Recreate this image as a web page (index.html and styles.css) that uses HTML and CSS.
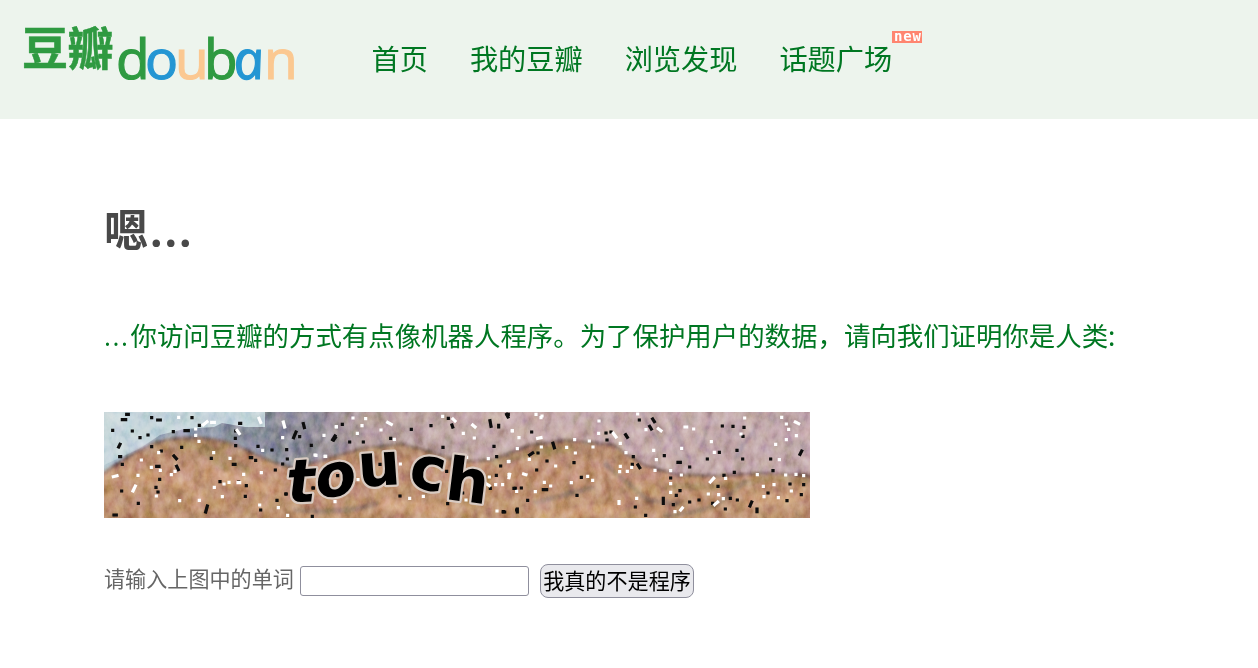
FILE: index.html
```
<!DOCTYPE html>
<html lang="zh-CN">
<head>
<meta charset="utf-8">
<title>豆瓣</title>
<link rel="stylesheet" href="styles.css">
</head>
<body>
<header class="header">
  <svg class="logo" width="280" height="66" viewBox="0 0 280 66" role="img" aria-label="豆瓣 douban">
    <text class="logo-cn" x="-2 43.500" y="46">豆瓣</text>
    <text class="logo-en" y="60"><tspan class="green" x="92">d</tspan><tspan class="blue" x="121">o</tspan><tspan class="orange" x="151">u</tspan><tspan class="green" x="180">b</tspan><tspan class="orange" x="240">n</tspan></text>
    <text class="logo-en logo-a blue" transform="translate(212 60) skewX(10)">a</text>
  </svg>
  <nav class="nav">
    <a class="nav-link">首页</a>
    <a class="nav-link">我的豆瓣</a>
    <a class="nav-link">浏览发现</a>
    <a class="nav-link">话题广场<span class="badge">new</span></a>
  </nav>
</header>
<main class="content">
  <h1 class="title">嗯<span class="title-dots">...</span></h1>
  <p class="message"><span class="dots">...</span>你访问豆瓣的方式有点像机器人程序。为了保护用户的数据，请向我们证明你是人类:</p>
  <svg class="captcha" width="706" height="106" viewBox="0 0 706 106">
    <defs>
      <linearGradient id="sky" x1="0" x2="1" y1="0" y2="0">
        <stop offset="0" stop-color="#b9c8d1"/><stop offset=".12" stop-color="#929bab"/><stop offset=".2" stop-color="#858a99"/><stop offset=".29" stop-color="#8c8a94"/><stop offset=".37" stop-color="#b39d9b"/><stop offset=".6" stop-color="#c5aaa7"/><stop offset="1" stop-color="#bfa5a7"/>
      </linearGradient>
      <linearGradient id="hill" x1="0" x2="0" y1="0" y2="1">
        <stop offset="0" stop-color="#a8805f"/><stop offset=".35" stop-color="#c19173"/><stop offset="1" stop-color="#bb906b"/>
      </linearGradient>
      <filter id="soft" x="-5%" y="-20%" width="110%" height="140%"><feGaussianBlur stdDeviation="1.5"/></filter>
      <filter id="grain" x="0" y="0" width="100%" height="100%" color-interpolation-filters="sRGB">
        <feTurbulence type="fractalNoise" baseFrequency=".1 .07" numOctaves="4" seed="8"/>
        <feColorMatrix values="1.4 .3 .1 0 -.35  1.1 .6 .1 0 -.35  1.1 .2 .6 0 -.38  0 0 0 0 1"/>
      </filter>
      <filter id="dotblur" x="-5%" y="-5%" width="110%" height="110%"><feGaussianBlur stdDeviation="1.500"/></filter>
      <filter id="textblur"><feGaussianBlur stdDeviation=".4"/></filter>
    </defs>
    <rect width="706" height="106" fill="url(#sky)"/>
    <path d="M0 0H161V15L141 15L118 11L110 15L80 17L56 23L35 37L0 53Z" fill="#c5d5da"/>
    <g filter="url(#soft)">
      <path d="M-5 110V65Q20 45 49 32Q70 25 93 26Q115 27 129 32L163 48L190 57L216 49L259 36L299 32L336 43L356 50L389 48L426 33L463 28L509 33L539 53L573 63L613 64L663 61L711 64V110Z" fill="url(#hill)" stroke="#83675d" stroke-width="3"/>
      <path d="M75 31Q110 35 145 60M92 33L125 59M389 53Q430 37 478 37M560 74Q620 78 665 66L706 69" fill="none" stroke="#ab8961" stroke-width="7"/>
      <path d="M560 104Q600 100 615 91L643 68M430 91L490 75M500 51L544 88L575 92M190 98Q240 103 280 90" fill="none" stroke="#927867" stroke-width="5" opacity=".7"/>
      <path d="M24 63Q80 65 102 86M100 60L176 80M275 92L350 99M430 105L520 96M640 90L700 83" fill="none" stroke="#cb9d78" stroke-width="11"/>
      <path d="M565 6L586 48M537 0L557 35M656 8L630 48M606 9L596 38" fill="none" stroke="#a18b97" stroke-width="2"/>
    </g>
    <rect class="texture" width="706" height="106" filter="url(#grain)"/>
    <g class="specks">
      <g transform="translate(-4 -7) scale(.33333)" filter="url(#dotblur)">
        <path class="black" d="M80 28h5M67 44h10M155 38h0M173 45h8M276 38h0M298 61h0M38 76h0M97 78h0M120 98h0M144 90h0M220 80h0M255 77h10M60 118l-4 8M59 155h3M155 125h0M184 138h0M245 127h0M222 153l7 8M67 178h0M170 184h7M230 184l5 10M179 223h0M168 247h0M174 261h0M65 258h0M115 295h0M42 330h7M322 303l-5 18M419 55h3M407 78h0M406 100h0M407 122h0M334 160h0M400 178h5M451 158h4M467 166h0M474 124h0M516 135h0M560 134h0M562 162h0M548 177h0M526 195h0M360 230h0M416 231h0M439 242h0M436 274h0M531 286h0M558 267h0M482 315h0M610 56l3 12M588 81l-7 17M599 95h0M706 98l-5 7M634 121h0M640 249h0"/>
        <path class="white" d="M236 37h0M310 59l11-9M335 52h8M287 72h0M287 91h0M297 109h0M341 143h0M176 143h0M124 165h0M154 187h0M181 196h0M214 209h0M225 199h0M114 211h0M40 215l11-3M106 243l-7 15M169 273h0M239 287h0M298 286h0M367 275h0M343 247h0M372 237h0M387 232h0M414 233h5M390 160h0M431 208h0M484 203h0M479 300h0M535 308h0M563 331h0M488 136h0M477 40l5 12M550 51l4 15M548 98h0M672 91h0M709 65h0M411 76l7 10M648 151h0M675 154h0"/>
      </g>
      <g transform="translate(176 -7) scale(.33333)" filter="url(#dotblur)">
        <path class="black" d="M187 58h0M165 93l-7 11M209 111h0M250 111h0M394 73h0M453 62h0M505 40h0M516 60l2 6M332 100h0M489 127h0M630 47l3 17M656 61v5M682 28h3M642 124h0M650 155h0M662 183h0M300 178h0M173 212h0M99 249h0M18 267h0M97 334h0M360 273h0M503 296h0M539 285h0M548 264h0M649 211h0M631 250h0M670 320h0M710 315h0M706 250h0M500 199h0"/>
        <path class="white" d="M219 39h0M257 41h0M246 62h0M169 66h0M232 85h0M303 75h0M323 52l11 6M343 103h0M488 34h0M519 42l6 6M550 85h0M578 60l7 6M583 99h0M697 77h0M625 161h0M687 169h0M687 209h0M628 216h0M620 237l8 5M647 239h0M668 239h0M430 274h0M389 280h0M165 290h0M234 224h0M361 177h0M530 275h0M558 285h0M651 318h0M137 154h0M105 150h0M560 157h0M710 259h0"/>
      </g>
      <g transform="translate(396 -7) scale(.33333)" filter="url(#dotblur)">
        <path class="black" d="M20 28l4 8M95 81h0M159 115l4 13M98 144l-9 6M114 144h0M141 168h0M110 195h0M222 173h0M244 217h0M42 250h0M64 249h0M130 254h10M83 286h0M10 321h4M52 312v9M231 271h0M318 84h0M333 81h0M321 105h0M377 89l5 8M418 45h0M458 42l5 8M449 64l5 8M400 155h0M397 178h0M414 180l5 8M493 152h0M534 172h7M569 186h0M512 219h0M540 257h0M529 271h0M490 280v15M520 299h0M569 291h0M597 285h0M406 306h0M437 331h0M667 63h0M699 64h0M732 67h0M729 94h0M711 136h0M658 142h0M622 162h0M728 162h0M703 202h0M672 211h0M654 244h0M691 280h0M712 285h0M676 312h0M638 295h0M755 291l-5 12M771 312v8M812 162h0M819 197h0M804 264h0M870 237h0M911 239h0M904 269h0M861 287h0M905 138l-5 10"/>
        <path class="white" d="M108 28h0M126 33h0M123 38h0M37 78h0M57 98h0M113 100l10-2M124 126h0M52 131h0M88 163h0M25 170h0M29 208l-2 10M71 207l7 2M200 127h0M224 104h0M226 144h0M268 108h0M279 126h0M167 183h0M214 233h0M263 214h0M278 226h0M133 232h0M152 243h0M106 260h0M297 48h0M296 85h0M340 85l8 11M361 115h0M378 143h0M361 184h0M359 200h0M395 187h0M382 199h0M413 27h0M438 74h0M475 71l8 6M555 66h5M581 72h0M545 130h0M461 136h0M469 164h0M465 196h0M512 197h0M544 210h0M512 236h0M512 262h0M547 309l-5 6M525 320h0M410 280h0M357 290v5M634 110h0M643 142h0M641 220l-10 11M677 220h0M625 267h0M656 269h0M670 281h0M653 291l-9 8M734 39h0M723 87h0M845 37h0M859 57h0M886 51l10 5M866 73h0M889 92h0M859 104h0M827 118h0M838 164h0M772 209h0M857 210h0M888 208h0M822 239h0M790 244h0M792 275h0M835 278h0M874 258h0M911 212h0"/>
      </g>
    </g>
    <text class="captcha-word" filter="url(#textblur)"><tspan x="184 214" y="91 87" rotate="-4 -9">to</tspan><tspan class="upright" x="255 303 340" y="75 74 87" rotate="-4 11 7">uch</tspan></text>
  </svg>
  <form class="form">
    <label class="label" for="word">请输入上图中的单词</label>
    <input class="field" id="word" type="text">
    <button class="submit" type="button">我真的不是程序</button>
  </form>
</main>
</body>
</html>
```
FILE: styles.css
```
* { box-sizing: border-box; }
body {
  margin: 0;
  height: 668px;
  overflow: hidden;
  background: #fff;
  font-family: "Noto Sans CJK SC", sans-serif;
}
.header {
  display: flex;
  align-items: flex-start;
  height: 119px;
  padding: 19px 0 0 24px;
  background: #edf4ed;
}
.logo { display: block; flex: none; overflow: visible; }
.logo-cn { font: 700 46px "Noto Sans CJK SC", sans-serif; fill: #2f9a41; stroke: #2f9a41; stroke-width: .5; }
.logo-en { font: 400 55px "Open Sans", sans-serif; stroke-width: 1.200px; }
.logo-a { font-style: italic; font-size: 54px; }
.green { fill: #2f9a41; stroke: #2f9a41; }
.blue { fill: #2496d3; stroke: #2496d3; }
.orange { fill: #fbc891; stroke: #fbc891; }
.nav { display: flex; gap: 42px; padding: 18px 0 0 67.500px; }
.nav-link {
  position: relative;
  color: #007722;
  font-size: 28.200px;
  line-height: 42px;
  white-space: nowrap;
}
.badge {
  position: absolute;
  left: 113px;
  top: -6px;
  width: 30px;
  height: 12px;
  background: #ff8570;
  color: #fff;
  font: 700 14px/10px "DejaVu Sans Mono", monospace;
  letter-spacing: .8px;
  text-indent: 1px;
  text-align: center;
}
.content { padding: 74px 0 0 104px; }
.title { margin: 0; color: #494949; font-size: 44px; line-height: 70px; font-weight: 700; }
.title-dots { font-family: "Open Sans", sans-serif; letter-spacing: 2px; margin-left: 2px; }
.message {
  margin: 50px 0 0;
  color: #007722;
  font-size: 26.430px;
  line-height: 40px;
  white-space: nowrap;
}
.dots { display: inline-block; width: 26.500px; font-family: "Open Sans", sans-serif; letter-spacing: 1.500px; }
.captcha { display: block; margin-top: 56px; }
.texture { mix-blend-mode: soft-light; opacity: .65; }
.specks path { fill: none; stroke-width: 9.500px; stroke-linecap: square; }
.specks .black { stroke: #090909; }
.specks .white { stroke: #fff; }
.captcha-word {
  font: italic 700 60px "DejaVu Sans", sans-serif;
  fill: #000;
  stroke: #d9cbc2;
  stroke-width: 4.500px;
  stroke-linejoin: round;
  paint-order: stroke;
}
.upright { font-style: normal; }
.form { display: flex; align-items: center; margin-top: 46px; height: 34px; }
.label { width: 196px; padding-bottom: 7px; color: #666; font-size: 21.100px; line-height: 30px; white-space: nowrap; }
.field { width: 229px; height: 30px; padding: 1px 4px; border: 1px solid #8f8f9d; border-radius: 3px; background: #fff; }
.submit {
  width: 154px;
  height: 34px;
  margin-left: 11px;
  padding: 0 0 2px;
  border: 1px solid #8f8f9d;
  border-radius: 8px;
  background: #e9e9ed;
  color: #000;
  font: 21.100px/30px "Noto Sans CJK SC", sans-serif;
  white-space: nowrap;
}
```
